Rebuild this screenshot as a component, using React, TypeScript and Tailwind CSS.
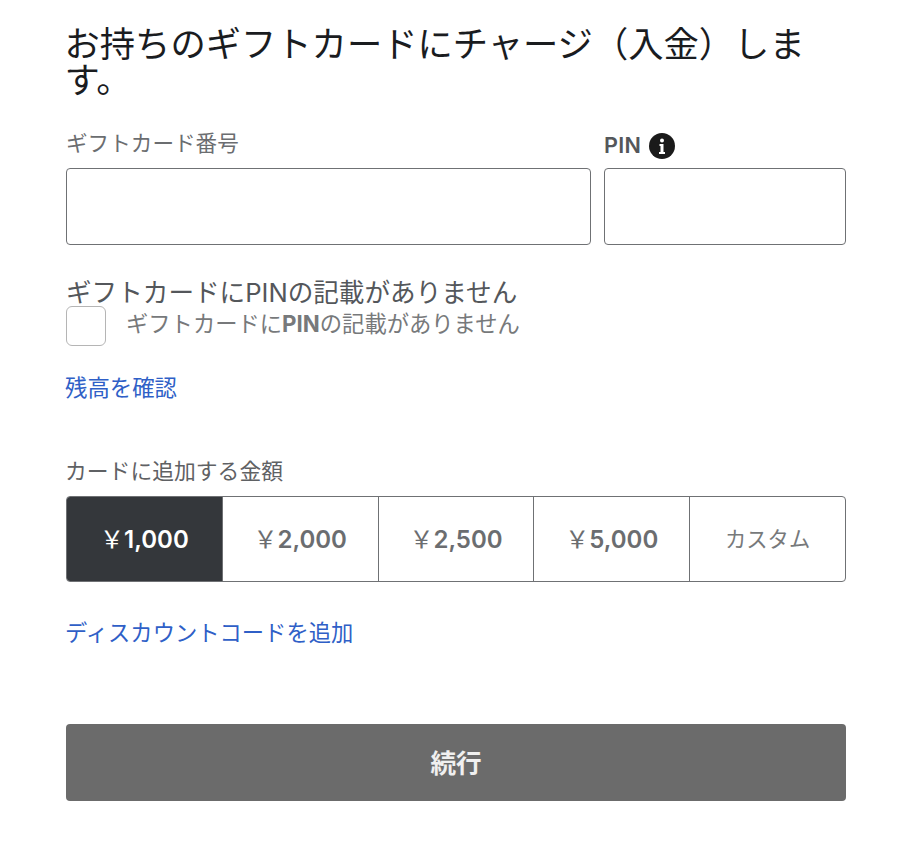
export default function App() {
  const jp = { fontFamily: '"Inter","Noto Sans CJK JP",sans-serif' };
  const amounts = ["1,000", "2,000", "2,500", "5,000"];
  return (
    <div style={jp} className="w-[924px] h-[846px] bg-white pl-[66px] pr-[78px] pt-[27px] overflow-hidden">
      <h1 className="text-[35.3px] leading-[36px] text-[#1a1c1f] font-normal w-[760px] ml-[-1.5px]">お持ちのギフトカードにチャージ（入金）します。</h1>
      <div className="flex gap-[13px] mt-[30px]">
        <div className="w-[525px]">
          <div className="text-[21.6px] leading-[28px] h-[39px] text-[#6b6d70]">ギフトカード番号</div>
          <div className="h-[77px] border border-[#6f7174] rounded-[4px]" />
        </div>
        <div className="w-[242px]">
          <div className="flex items-center gap-[7px] h-[39px] pb-[8px]">
            <span className="text-[21.6px] leading-[30px] font-semibold tracking-[0.3px] text-[#54575b]">PIN</span>
            <svg width="26" height="26" viewBox="0 0 26 26" className="mt-[3px] ml-[1px]">
              <circle cx="13" cy="13" r="13" fill="#1a1a1a" />
              <circle cx="13" cy="7.6" r="2" fill="#fff" />
              <path d="M10.5 11h4v8h1.5v2h-6v-2h1.5v-6h-1z" fill="#fff" />
            </svg>
          </div>
          <div className="h-[77px] border border-[#6f7174] rounded-[4px]" />
        </div>
      </div>
      <div className="text-[25.6px] leading-[30px] text-[#54575b] mt-[33px]">ギフトカードにPINの記載がありません</div>
      <div className="flex items-start mt-[-2px]">
        <div className="w-[40px] h-[40px] border border-[#b5b5b5] rounded-[6px]" />
        <div className="ml-[20px] text-[22.3px] leading-[36px] text-[#77797b]">ギフトカードに<span className="font-bold">PIN</span>の記載がありません</div>
      </div>
      <a className="block text-[22.4px] leading-[30px] text-[#2f5fc7] mt-[27px] ml-[-1px]">残高を確認</a>
      <div className="text-[21.8px] leading-[30px] text-[#5f6164] mt-[53px] ml-[-1px]">カードに追加する金額</div>
      <div className="flex h-[86px] mt-[10px] border border-[#6f7174] rounded-[4px] overflow-hidden">
        {amounts.map((a, i) => (
          <div key={a} className={i === 0 ? "flex-1 flex items-center justify-center pt-[2px] bg-[#34373b] text-white text-[24px] font-semibold border-r border-[#6f7174]" : "flex-1 flex items-center justify-center pt-[2px] text-[#6b6d70] text-[24px] font-semibold border-r border-[#6f7174]"}><span className="font-normal">￥</span>{a}</div>
        ))}
        <div className="flex-1 flex items-center justify-center pt-[2px] text-[#77797b] text-[21.3px]">カスタム</div>
      </div>
      <a className="block text-[22.3px] leading-[30px] text-[#2f5fc7] mt-[36px] ml-[-1px]">ディスカウントコードを追加</a>
      <div className="h-[77px] mt-[76px] pt-[3px] rounded-[4px] bg-[#6b6b6b] flex items-center justify-center text-white/90 text-[25.6px] font-bold">続行</div>
    </div>
  );
}
